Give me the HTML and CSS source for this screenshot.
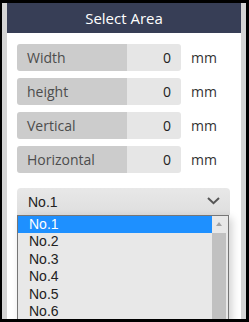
FILE: index.html
```html
<!DOCTYPE html>
<html lang="en">
<head>
  <meta charset="UTF-8">
  <meta name="viewport" content="width=device-width, initial-scale=1.0">
  <title>Select Area</title>
  <link rel="stylesheet" href="styles.css">
</head>
<body>
  <div class="frame">
    <div class="panel">
      <div class="panel-title">Select Area</div>

      <div class="fields">
        <div class="field">
          <div class="field-label">Width</div>
          <div class="field-value">0</div>
          <div class="field-unit">mm</div>
        </div>
        <div class="field">
          <div class="field-label">height</div>
          <div class="field-value">0</div>
          <div class="field-unit">mm</div>
        </div>
        <div class="field">
          <div class="field-label">Vertical</div>
          <div class="field-value">0</div>
          <div class="field-unit">mm</div>
        </div>
        <div class="field">
          <div class="field-label">Horizontal</div>
          <div class="field-value">0</div>
          <div class="field-unit">mm</div>
        </div>
      </div>

      <div class="select-wrap">
        <div class="select">
          <span>No.1</span>
          <svg class="chevron" width="13" height="8" viewBox="0 0 13 8">
            <path d="M1 1 L6.5 6.2 L12 1" fill="none" stroke="#555" stroke-width="2"/>
          </svg>
        </div>

        <!-- открытый список -->
        <div class="options">
          <ul class="option-list">
            <li class="option selected">No.1</li>
            <li class="option">No.2</li>
            <li class="option">No.3</li>
            <li class="option">No.4</li>
            <li class="option">No.5</li>
            <li class="option">No.6</li>
          </ul>
          <div class="scrollbar">
            <div class="scroll-up"></div>
            <div class="scroll-thumb"></div>
          </div>
        </div>
      </div>
    </div>
  </div>
</body>
</html>
```

FILE: styles.css
```css
/* Окно */
body {
  margin: 0;
  background: #000;
  font-family: 'Open Sans', sans-serif;
}

.frame {
  height: 316px;
  margin: 3px 3px 0 2px;
  padding: 0 5px;
  background: #d4d4d4;
}

.panel {
  height: 316px;
  background: #fff;
  overflow: hidden;
}

/* Заголовок */
.panel-title {
  height: 30px;
  line-height: 30px;
  background: #373e56;
  color: #fff;
  font-size: 15px;
  text-align: center;
}

/* Поля */
.fields {
  display: flex;
  flex-direction: column;
  gap: 7px;
  padding: 11px 0 0 10px;
}

.field {
  display: flex;
  align-items: center;
  height: 27px;
  font-size: 14px;
}

.field-label {
  width: 100px;
  height: 27px;
  line-height: 27px;
  padding-left: 10px;
  background: #cccccc;
  color: #4d4d4d;
  border-radius: 3px 0 0 3px;
}

.field-value {
  width: 44px;
  height: 27px;
  line-height: 27px;
  padding-right: 10px;
  background: #e6e6e6;
  color: #222;
  text-align: right;
  border-radius: 0 3px 3px 0;
}

.field-unit {
  margin-left: 10px;
  color: #333;
}

/* Выпадающий список */
.select-wrap {
  position: relative;
  margin: 15px 0 0 10px;
  width: 213px;
}

.select {
  display: flex;
  align-items: center;
  justify-content: space-between;
  height: 27px;
  padding: 0 10px 0 11px;
  background: linear-gradient(#e8e8e8, #dedede);
  border-radius: 4px 4px 0 0;
  font-family: 'Liberation Sans', Arial, sans-serif;
  font-size: 14px;
  color: #222;
}

.chevron {
  margin-top: -2px;
}

.options {
  position: absolute;
  top: 27px;
  left: 0;
  width: 210px;
  height: 140px;
  display: flex;
  border: 1px solid #767676;
  background: #e8e8e8;
  box-shadow: 3px 3px 8px rgba(0, 0, 0, 0.18);
}

.option-list {
  flex: 1;
  margin: 0;
  padding: 0;
  list-style: none;
  font-family: 'Liberation Sans', Arial, sans-serif;
  font-size: 14px;
  color: #222;
}

.option {
  height: 17.4px;
  line-height: 17.4px;
  padding-left: 11px;
}

.option.selected {
  background: #1e90ff;
  color: #fff;
}

.scrollbar {
  width: 16px;
  display: flex;
  flex-direction: column;
  align-items: flex-start;
}

.scroll-up {
  width: 14px;
  height: 17px;
  position: relative;
}

.scroll-up::after {
  content: "";
  position: absolute;
  left: 4px;
  top: 6px;
  border-left: 3.5px solid transparent;
  border-right: 3.5px solid transparent;
  border-bottom: 4px solid #a3a3a3;
}

.scroll-thumb {
  width: 14px;
  flex: 1;
  background: #c1c1c1;
}
```
